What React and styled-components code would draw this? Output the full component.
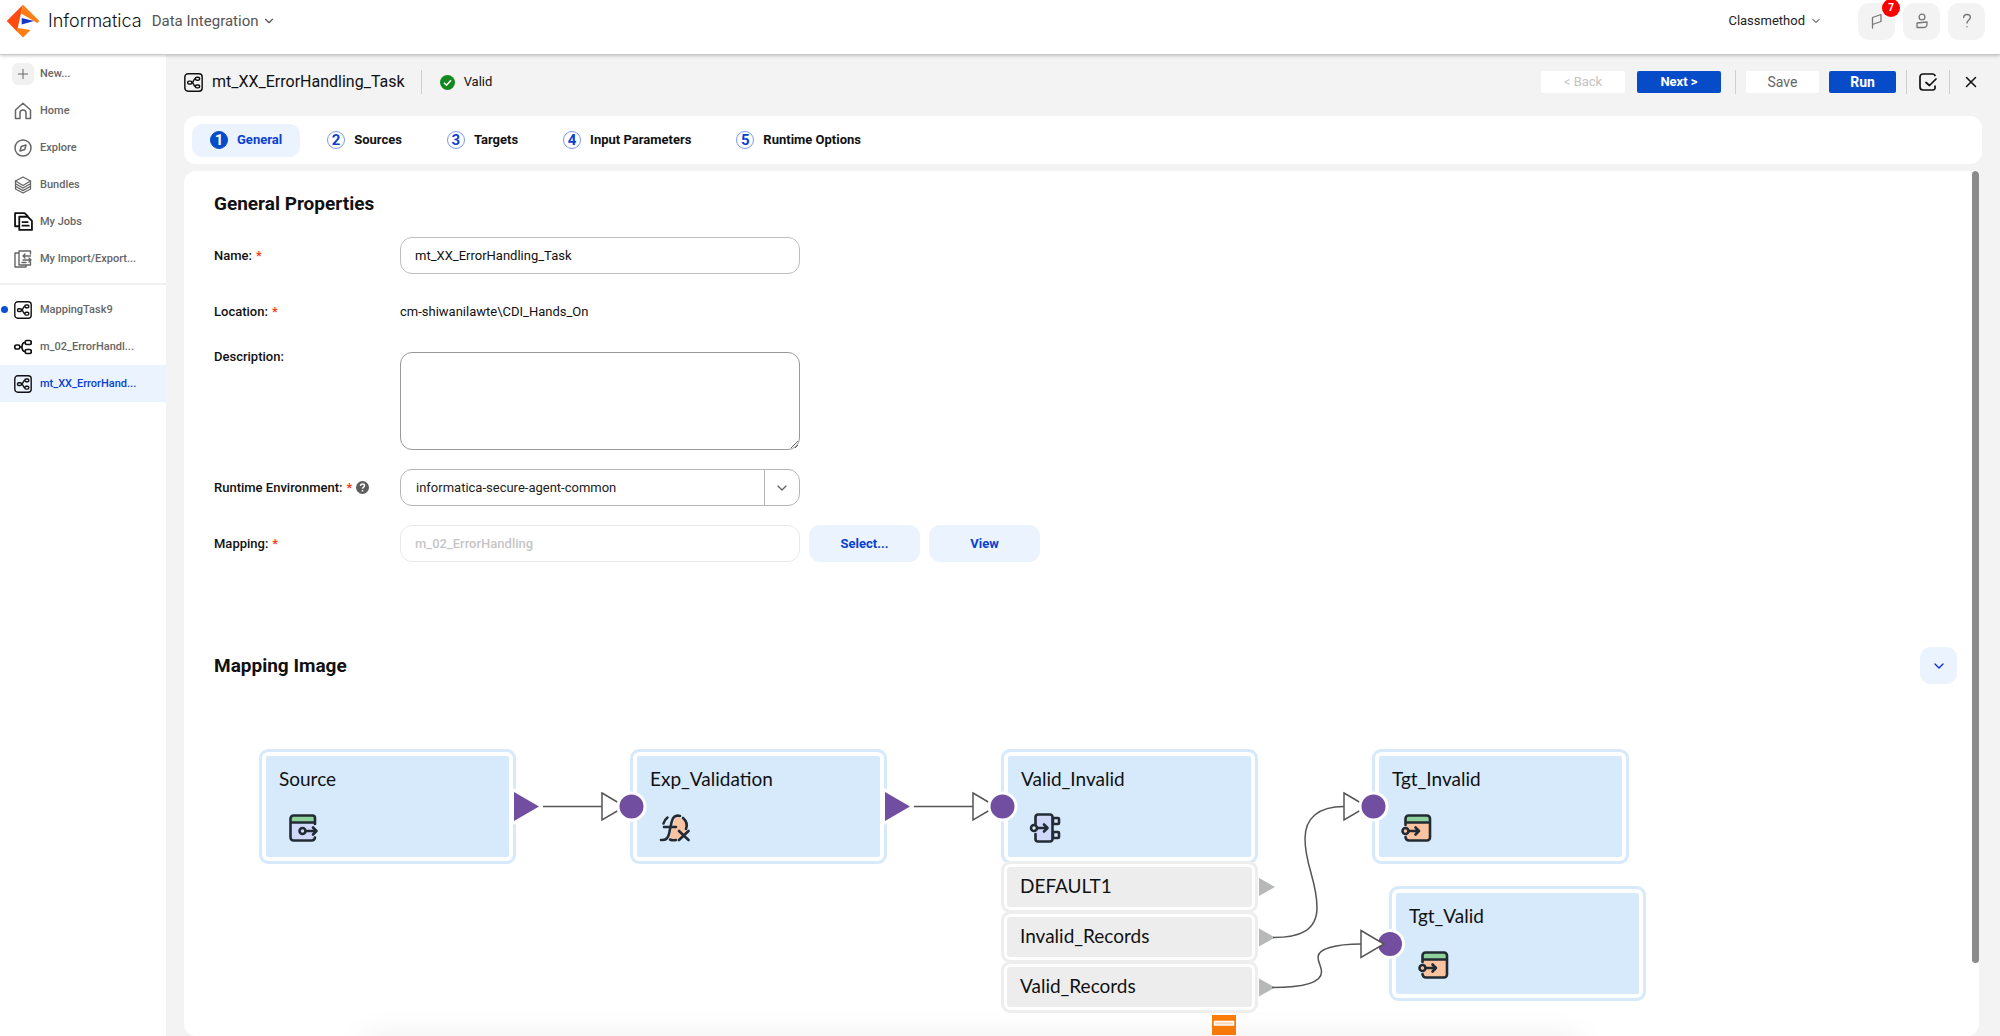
import React from "react";
import styled, { createGlobalStyle } from "styled-components";
import { ChevronDown, Plus, X } from "lucide-react";

const GlobalStyle = createGlobalStyle`
  * {
    box-sizing: border-box;
  }
  body {
    margin: 0;
    font-family: Roboto, "Liberation Sans", sans-serif;
    font-size: 13px;
    line-height: 16px;
    color: #111;
    background: #f3f3f3;
  }
  button, input, select, textarea {
    font: inherit;
    color: inherit;
  }
  button {
    padding: 0;
    border: 0;
    cursor: pointer;
  }
  a {
    color: inherit;
    text-decoration: none;
  }
  svg {
    display: block;
    flex: none;
  }
`;

const Page = styled.div`
  display: flex;
  flex-direction: column;
  height: 100vh;
  overflow: hidden;
`;

/* header */

const Header = styled.header`
  display: flex;
  align-items: center;
  flex: none;
  height: 55px;
  padding: 0 15px 12px 6px;
  background: #fff;
  border-bottom: 1px solid #c9c9c9;
  box-shadow: 0 1px 3px rgba(0, 0, 0, 0.2);
  z-index: 1;
`;

const Brand = styled.span`
  margin-left: 8px;
  font-family: Inter, sans-serif;
  font-size: 18px;
  font-weight: 300;
  line-height: 24px;
  color: #111;
`;

const Product = styled.button`
  display: flex;
  align-items: center;
  gap: 4px;
  margin-left: 10px;
  font-size: 15px;
  color: #555;
  background: none;
`;

const Org = styled.button`
  display: flex;
  align-items: center;
  gap: 5px;
  margin-left: auto;
  margin-right: 36px;
  font-size: 13px;
  color: #222;
  background: none;
`;

const HeaderActions = styled.div`
  display: flex;
  gap: 8px;
`;

const HeaderButton = styled.button`
  position: relative;
  display: grid;
  place-items: center;
  width: 37px;
  height: 37px;
  border-radius: 11px;
  color: #777;
  background: #f3f3f3;
`;

const Badge = styled.span`
  position: absolute;
  top: -4px;
  right: -5px;
  width: 18px;
  height: 18px;
  border-radius: 50%;
  font-size: 10px;
  font-weight: 700;
  line-height: 18px;
  color: #fff;
  background: #f80000;
`;

/* sidebar */

const Body = styled.div`
  display: flex;
  flex: 1;
  min-height: 0;
`;

const Sidebar = styled.nav`
  flex: none;
  width: 166px;
  background: #fff;
`;

const NavGroup = styled.div`
  & + & {
    margin-top: 6px;
    padding-top: 6px;
    border-top: 2px solid #f1f1f1;
  }
`;

const NavItem = styled.a`
  position: relative;
  display: flex;
  align-items: center;
  gap: 6px;
  height: 37px;
  padding-left: 12px;
  font-size: 11px;
  font-weight: 500;
  color: ${({ $active }) => ($active ? "#0a3fd0" : "#666")};
  background: ${({ $active }) => ($active ? "#ebf3ff" : "transparent")};
`;

const NavIcon = styled.span`
  display: grid;
  place-items: center;
  width: 22px;
  height: 22px;
  border-radius: 6px;
  color: ${({ $dark }) => ($dark ? "#111" : "#666")};
  background: ${({ $boxed }) => ($boxed ? "#f1f1f1" : "transparent")};
`;

const Dot = styled.span`
  position: absolute;
  left: 1px;
  top: 15px;
  width: 7px;
  height: 7px;
  border-radius: 50%;
  background: #0a4fcf;
`;

/* main column */

const Main = styled.main`
  display: flex;
  flex-direction: column;
  flex: 1;
  min-width: 0;
  padding: 0 18px;
`;

const TitleBar = styled.div`
  display: flex;
  align-items: center;
  flex: none;
  height: 54px;
  margin-bottom: 7px;
`;

const TaskTitle = styled.h1`
  margin: 0 16px 0 9px;
  font-size: 16px;
  font-weight: 400;
  line-height: 20px;
`;

const Divider = styled.span`
  width: 1px;
  height: 24px;
  background: #cfcfcf;
`;

const Status = styled.span`
  display: flex;
  align-items: center;
  gap: 9px;
  margin-left: 18px;
`;

const Toolbar = styled.div`
  display: flex;
  align-items: center;
  gap: 10px;
  margin-left: auto;
`;

const Pager = styled.div`
  display: flex;
  gap: 12px;
  margin-right: 4px;
`;

const ToolButton = styled.button`
  width: ${({ $width }) => $width}px;
  height: 22px;
  border-radius: 2px;
  font-size: ${({ $small }) => ($small ? 13 : 14)}px;
  font-weight: ${({ $primary }) => ($primary ? 700 : 400)};
  color: ${({ $primary }) => ($primary ? "#fff" : "#666")};
  background: ${({ $primary }) => ($primary ? "#064cc8" : "#fff")};

  &:disabled {
    color: #c4c4c4;
  }
`;

const IconButton = styled.button`
  display: grid;
  place-items: center;
  width: 22px;
  height: 24px;
  color: #111;
  background: none;
`;

const Steps = styled.nav`
  display: flex;
  align-items: center;
  gap: 9px;
  flex: none;
  height: 48px;
  padding: 0 8px;
  border-radius: 12px;
  background: #fff;
`;

const Step = styled.a`
  display: flex;
  align-items: center;
  gap: 9px;
  height: 33px;
  padding: 0 18px;
  border-radius: 10px;
  font-weight: 700;
  color: ${({ $active }) => ($active ? "#0a3fd0" : "#111")};
  background: ${({ $active }) => ($active ? "#ebf3ff" : "transparent")};
`;

const StepNumber = styled.span`
  width: 18px;
  height: 18px;
  border: 1px solid ${({ $active }) => ($active ? "#064cc8" : "#7c9ae6")};
  border-radius: 50%;
  font-size: 15px;
  line-height: 16px;
  text-align: center;
  color: ${({ $active }) => ($active ? "#fff" : "#0a3fd0")};
  background: ${({ $active }) => ($active ? "#064cc8" : "#fff")};
`;

const Panel = styled.section`
  position: relative;
  flex: 1;
  min-height: 0;
  margin: 7px 3px 0 0;
  padding: 22px 22px 0 30px;
  border-radius: 12px 4px 12px 12px;
  overflow: hidden;
  background: #fff;
`;

const ScrollThumb = styled.div`
  position: absolute;
  top: 0;
  right: 0;
  width: 7px;
  height: 792px;
  border-radius: 4px;
  background: #8b8b8b;
`;

const BottomShade = styled.div`
  position: absolute;
  left: 180px;
  right: 400px;
  bottom: -16px;
  height: 10px;
  box-shadow: 0 0 32px rgba(0, 0, 0, 0.16);
`;

const SectionTitle = styled.h2`
  margin: 0;
  font-size: 19px;
  font-weight: 700;
  line-height: 22px;
`;

/* form */

const Form = styled.form`
  display: flex;
  flex-direction: column;
  gap: 19px;
  margin-top: 22px;
`;

const FormRow = styled.div`
  display: grid;
  grid-template-columns: 177px auto;
  column-gap: 9px;
  align-items: ${({ $top }) => ($top ? "start" : "center")};
  justify-content: start;
  min-height: 37px;
`;

const Label = styled.label`
  display: flex;
  align-items: center;
  gap: 4px;
  font-weight: 500;
`;

const Required = styled.span`
  color: #f5330a;
`;

const Controls = styled.div`
  display: flex;
  gap: 9px;
`;

const TextInput = styled.input`
  width: 400px;
  height: 37px;
  padding: 0 14px;
  border: 1px solid #bdbdbd;
  border-radius: 12px;
  background: #fff;

  &:disabled {
    border-color: #e9e9e9;
    font-weight: 500;
    color: #c6c6c6;
  }
`;

const TextArea = styled.textarea`
  display: block;
  width: 400px;
  height: 98px;
  margin-top: 3px;
  padding: 8px 14px;
  border: 1px solid #999;
  border-radius: 12px;
  background: #fff;
`;

const SelectBox = styled.div`
  display: flex;
  width: 400px;
  height: 37px;
  border: 1px solid #b5b5b5;
  border-radius: 12px;
`;

const Select = styled.select`
  flex: 1;
  padding: 0 15px;
  border: 0;
  appearance: none;
  color: #222;
  background: none;
`;

const SelectArrow = styled.span`
  display: grid;
  place-items: center;
  width: 35px;
  border-left: 1px solid #b5b5b5;
  color: #666;
`;

const SoftButton = styled.button`
  width: 111px;
  height: 37px;
  border-radius: 11px;
  font-weight: 700;
  color: #0a3fd0;
  background: #ebf3ff;
`;

const ImageHeader = styled.div`
  display: flex;
  align-items: center;
  justify-content: space-between;
  margin-top: 85px;
`;

const CollapseButton = styled.button`
  display: grid;
  place-items: center;
  width: 37px;
  height: 37px;
  border-radius: 11px;
  color: #0a2fcf;
  background: #ebf3ff;
`;

/* mapping diagram */

const Canvas = styled.div`
  position: relative;
  height: 352px;
  margin-left: -30px;
  font-family: Lato, sans-serif;
  font-size: 19px;
  line-height: 24px;
  color: #111;
`;

const Node = styled.div`
  position: absolute;
  left: ${({ $x }) => $x}px;
  top: ${({ $y }) => $y}px;
  display: flex;
  flex-direction: column;
  gap: 21px;
  width: 257px;
  height: 115px;
  padding: 15px 17px;
  border: 3px solid #d7eafc;
  border-radius: 9px;
  background: #d7eafc;
  box-shadow: inset 0 0 0 4px #fff;

  svg {
    margin-left: 8px;
  }
`;

const GroupRow = styled.div`
  position: absolute;
  left: 817px;
  top: ${({ $y }) => $y}px;
  width: 257px;
  height: 52px;
  padding: 10px 16px;
  border: 3px solid #eee;
  border-radius: 9px;
  background: #ededed;
  box-shadow: inset 0 0 0 3px #fff;
`;

const Wires = styled.svg`
  position: absolute;
  left: 0;
  top: 0;
`;

const RemoveMark = styled.svg`
  position: absolute;
  left: 1028px;
  top: 331px;
`;

const Stroke = ({ size = 18, width = 1.5, children }) => (
  <svg
    width={size}
    height={size}
    viewBox="0 0 18 18"
    fill="none"
    stroke="currentColor"
    strokeWidth={width}
    strokeLinecap="round"
    strokeLinejoin="round"
    aria-hidden="true"
  >
    {children}
  </svg>
);

const Logo = () => (
  <svg width="34" height="34" viewBox="0 0 34 34" aria-hidden="true">
    <path d="M17 .7.7 17 11 27.500 15 9z" fill="#ff4a12" />
    <path d="M17 .7 33.300 17l-2 2L15 9.500z" fill="#ff7d12" />
    <path d="M12 24 24.500 26 17 33.600 10.500 27z" fill="#ff7d12" />
    <path d="M15.700 14 28 17l-12.300 3.500z" fill="#1636c8" />
  </svg>
);

const HomeIcon = () => (
  <Stroke>
    <path d="M1.500 16.500V8L9 1.200 16.500 8v8.500H12V11a3 3 0 0 0-6 0v5.500z" />
  </Stroke>
);

const ExploreIcon = () => (
  <Stroke>
    <circle cx="9" cy="9" r="8" />
    <path d="m6 12 1.200-4.500L12 6l-1.200 4.500z" />
  </Stroke>
);

const BundlesIcon = () => (
  <Stroke width={1.3}>
    <path d="M9 1 1.500 5 9 9.500 16.500 5z" />
    <path d="M1.500 5v8L9 17l7.500-4V5M1.500 7.700 9 12l7.500-4.300M1.500 10.300 9 14.600l7.500-4.300" />
  </Stroke>
);

const JobsIcon = () => (
  <Stroke size={19} width={1.7}>
    <path d="M4 13.500H1V1h9l3 3" />
    <path d="M5 4.500h8l4 4V17H5zM8 9.500h5M8 13h6" />
  </Stroke>
);

const ImportIcon = () => (
  <Stroke width={1.4}>
    <path d="M4.500 3H1v14h11v-2M16.500 4V1H5v14h11.500v-3" />
    <path d="M16.500 6H9M11 4 9 6l2 2M9 10h8M15 8l2 2-2 2M8 12.500h4" />
  </Stroke>
);

const TaskIcon = ({ size = 18 }) => (
  <Stroke size={size} width={1.4}>
    <rect x="0.800" y="0.800" width="16.400" height="16.400" rx="3" />
    <rect x="3.500" y="7.700" width="4" height="2.800" rx="1.300" />
    <rect x="10.800" y="4" width="4" height="2.800" rx="1.300" />
    <rect x="10.800" y="11.300" width="4" height="2.800" rx="1.300" />
    <path d="M7.500 9c2 0 1.300-3.600 3.300-3.600M7.500 9c2 0 1.300 3.700 3.300 3.700" />
  </Stroke>
);

const MappingIcon = () => (
  <Stroke width={1.7}>
    <rect x="0.800" y="7" width="5" height="4" rx="1.500" />
    <rect x="11.200" y="2.500" width="6" height="4" rx="1.500" />
    <rect x="11.200" y="11.500" width="6" height="4" rx="1.500" />
    <path d="M5.800 9H8M11.200 4.500C8.500 4.500 8 6 8 9s.500 4.500 3.200 4.500" />
  </Stroke>
);

const FlagIcon = () => (
  <Stroke width={1.3}>
    <path d="M4.500 16V5.500L13 2.500v7l-8.500 3" />
  </Stroke>
);

const UserIcon = () => (
  <Stroke width={1.3}>
    <circle cx="9" cy="5" r="2.900" />
    <path d="M4 11v4.500h6.500c2 0 3.500-1.500 3.500-3.500v-2z" />
  </Stroke>
);

const HelpIcon = () => (
  <Stroke width={1.4}>
    <path d="M5.700 5.500C5.700 3.500 7 2.500 9 2.500s3.300 1.200 3.300 3c0 2.500-3.300 2.500-3.300 5.500M9 14.600v.200" />
  </Stroke>
);

const ValidateIcon = () => (
  <Stroke width={1.7}>
    <path d="M16 2.500A3 3 0 0 0 14 1H4a3 3 0 0 0-3 3v10a3 3 0 0 0 3 3h10a2.500 2.500 0 0 0 2-1.500V13M7 9.500l3.500 3L17 6" />
  </Stroke>
);

const ValidIcon = () => (
  <svg width="15" height="15" viewBox="0 0 15 15" aria-hidden="true">
    <circle cx="7.500" cy="7.500" r="7.500" fill="#12891c" />
    <path d="m4 7.700 2.500 2.500L11 5.200" fill="none" stroke="#fff" strokeWidth="1.600" />
  </svg>
);

const HintIcon = () => (
  <svg width="13" height="13" viewBox="0 0 13 13" aria-hidden="true">
    <circle cx="6.500" cy="6.500" r="6.500" fill="#5e5e5e" />
    <path
      d="M4.500 5C4.500 3.700 5.300 3 6.500 3s2 .700 2 1.700c0 1.500-2 1.400-2 3M6.500 9v1.400"
      fill="none"
      stroke="#fff"
      strokeWidth="1.500"
    />
  </svg>
);

const nodeStroke = {
  fill: "none",
  stroke: "#222b33",
  strokeWidth: 2.6,
  strokeLinecap: "round",
  strokeLinejoin: "round"
};

const SourceIcon = () => (
  <svg width="32" height="32" viewBox="0 0 32 32" aria-hidden="true">
    <path d="M4 4h24v24H4z" fill="#cfd8fb" />
    <path d="M4 4h24v6H4z" fill="#8fd19a" />
    <g {...nodeStroke}>
      <path d="M28 12V6a2.500 2.500 0 0 0-2.500-2.500h-19A3 3 0 0 0 3.500 6.500v19a3 3 0 0 0 3 3h18a3.500 3.500 0 0 0 3.500-3M4 10.500h24" />
      <circle cx="15.500" cy="19" r="3" />
      <path d="M19 19h10M26 15.500l3.500 3.500-3.500 3.500" />
    </g>
  </svg>
);

const TargetIcon = () => (
  <svg width="32" height="32" viewBox="0 0 32 32" aria-hidden="true">
    <path d="M6 4h24v24H6z" fill="#fbc3a0" />
    <path d="M6 4h24v6H6z" fill="#8fd19a" />
    <g {...nodeStroke}>
      <path d="M5.500 13V6.500a3 3 0 0 1 3-3h18.500a3 3 0 0 1 3 3v19a3 3 0 0 1-3 3H9a3.500 3.500 0 0 1-3.500-3.500M6 10.500h24" />
      <circle cx="5.500" cy="19" r="3" fill="#fbc3a0" />
      <path d="M9 19h10M15.500 15.500 19 19l-3.500 3.500" />
    </g>
  </svg>
);

const ExpressionIcon = () => (
  <svg width="32" height="32" viewBox="0 0 32 32" aria-hidden="true">
    <circle cx="17" cy="16" r="11" fill="#fbc3a0" />
    <path d="M3 3h15L11 28H3z" fill="#d7eafc" />
    <g {...nodeStroke}>
      <path d="M22 4c-5-1.500-7.500 1.500-8.500 6.500L11 22c-1 4.500-3 6.500-8 6M6 15h12" />
      <path d="M25 6c3.500 3 4.500 7 3 11M5.500 11.500c.700-2.500 2-4.500 4-6M12 27.500c2 1 4 1 6 .500" />
      <path d="m21 19 9.500 9M30.500 19 21 28" />
    </g>
  </svg>
);

const RouterIcon = () => (
  <svg width="32" height="32" viewBox="0 0 32 32" aria-hidden="true">
    <path d="M7 4h16v24H7z" fill="#cfd8fb" />
    <g {...nodeStroke}>
      <path d="M6.500 12V5a2.500 2.500 0 0 1 2.500-2.500h12A2.500 2.500 0 0 1 23.500 5v22a2.500 2.500 0 0 1-2.500 2.500H9A2.500 2.500 0 0 1 6.500 27v-5" />
      <rect x="24" y="6" width="6" height="6" rx="1" />
      <rect x="24" y="20" width="6" height="6" rx="1" />
      <circle cx="5" cy="16" r="3" fill="#d7eafc" />
      <path d="M8.500 16H18M15 12.500l3.500 3.500-3.500 3.500" />
    </g>
  </svg>
);

const mainLinks = [
  { label: "New...", icon: <Plus size={16} strokeWidth={1.5} />, boxed: true },
  { label: "Home", icon: <HomeIcon /> },
  { label: "Explore", icon: <ExploreIcon /> },
  { label: "Bundles", icon: <BundlesIcon /> },
  { label: "My Jobs", icon: <JobsIcon />, dark: true },
  { label: "My Import/Export...", icon: <ImportIcon /> }
];

const openLinks = [
  { label: "MappingTask9", icon: <TaskIcon />, dark: true, unsaved: true },
  { label: "m_02_ErrorHandl...", icon: <MappingIcon />, dark: true },
  { label: "mt_XX_ErrorHand...", icon: <TaskIcon />, dark: true, active: true }
];

const steps = [
  "General",
  "Sources",
  "Targets",
  "Input Parameters",
  "Runtime Options"
];

const nodes = [
  { name: "Source", x: 75, y: 65, icon: <SourceIcon /> },
  { name: "Exp_Validation", x: 446, y: 65, icon: <ExpressionIcon /> },
  { name: "Valid_Invalid", x: 817, y: 65, icon: <RouterIcon /> },
  { name: "Tgt_Invalid", x: 1188, y: 65, icon: <TargetIcon /> },
  { name: "Tgt_Valid", x: 1205, y: 202, icon: <TargetIcon /> }
];

const groups = [
  { name: "DEFAULT1", y: 177 },
  { name: "Invalid_Records", y: 227 },
  { name: "Valid_Records", y: 277 }
];

const NavLink = ({ label, icon, dark, boxed, unsaved, active }) => (
  <NavItem href="#" $active={active}>
    {unsaved && <Dot />}
    <NavIcon $dark={dark} $boxed={boxed}>
      {icon}
    </NavIcon>
    {label}
  </NavItem>
);

const OutPort = ({ x, y }) => (
  <path
    d={`M${x} ${y - 14.5}l25 14.500-25 14.500z`}
    fill="#714e9f"
    stroke="#fff"
    strokeWidth="6"
    paintOrder="stroke"
  />
);

const InPort = ({ x, y }) => (
  <circle cx={x} cy={y} r="13.500" fill="#714e9f" stroke="#fff" strokeWidth="3" />
);

const OpenArrow = ({ x, y }) => (
  <path d={`M${x} ${y - 13.5}l23 13.500-23 13.500z`} fill="#fff" />
);

const Diagram = () => (
  <Canvas>
    {nodes.map(({ name, x, y, icon }) => (
      <Node key={name} $x={x} $y={y}>
        {name}
        {icon}
      </Node>
    ))}
    {groups.map(({ name, y }) => (
      <GroupRow key={name} $y={y}>
        {name}
      </GroupRow>
    ))}
    <Wires width="1480" height="352" viewBox="0 0 1480 352" aria-hidden="true">
      <OutPort x={330} y={122.5} />
      <OutPort x={701} y={122.5} />
      <g fill="#b7b9b9">
        <path d="M1075 194l16 9-16 9zM1075 244.500l16 9-16 9zM1075 294.500l16 9-16 9z" />
      </g>
      <g fill="none" stroke="#555" strokeWidth="1.500">
        <path d="M359 122.500h59M730 122.500h59" />
        <path d="M1089 253.500c27 0 44-7 44-30 0-27-12-42-12-69 0-20 13-32 39-32" />
        <path d="M1088 303.500c28 0 49.500-4 49.500-15.500 0-6-3.500-9-3.500-15 0-8 17-13 43-13" />
        <OpenArrow x={418} y={122.5} />
        <OpenArrow x={789} y={122.5} />
        <OpenArrow x={1160} y={122.5} />
      </g>
      <InPort x={447.5} y={122.5} />
      <InPort x={818.5} y={122.5} />
      <InPort x={1189.5} y={122.5} />
      <InPort x={1206} y={260} />
      <g stroke="#555" strokeWidth="1.500">
        <OpenArrow x={1177} y={260} />
      </g>
    </Wires>
    <RemoveMark width="24" height="20" viewBox="0 0 24 20" aria-hidden="true">
      <path d="M0 0h24v20H0z" fill="#fb7d0b" />
      <path d="M2.500 6.500h19v3.500h-19z" fill="#ffd9b8" stroke="#fff" strokeWidth="1.500" />
    </RemoveMark>
  </Canvas>
);

export default () => (
  <Page>
    <GlobalStyle />
    <Header>
      <Logo />
      <Brand>Informatica</Brand>
      <Product type="button">
        Data Integration
        <ChevronDown size={14} />
      </Product>
      <Org type="button">
        Classmethod
        <ChevronDown size={12} />
      </Org>
      <HeaderActions>
        <HeaderButton type="button" aria-label="Notifications">
          <FlagIcon />
          <Badge>7</Badge>
        </HeaderButton>
        <HeaderButton type="button" aria-label="Account">
          <UserIcon />
        </HeaderButton>
        <HeaderButton type="button" aria-label="Help">
          <HelpIcon />
        </HeaderButton>
      </HeaderActions>
    </Header>

    <Body>
      <Sidebar>
        <NavGroup>
          {mainLinks.map(link => (
            <NavLink key={link.label} {...link} />
          ))}
        </NavGroup>
        <NavGroup>
          {openLinks.map(link => (
            <NavLink key={link.label} {...link} />
          ))}
        </NavGroup>
      </Sidebar>

      <Main>
        <TitleBar>
          <TaskIcon size={19} />
          <TaskTitle>mt_XX_ErrorHandling_Task</TaskTitle>
          <Divider />
          <Status>
            <ValidIcon />
            Valid
          </Status>
          <Toolbar>
            <Pager>
              <ToolButton type="button" $width={84} $small disabled>
                &lt; Back
              </ToolButton>
              <ToolButton type="button" $width={84} $small $primary>
                Next &gt;
              </ToolButton>
            </Pager>
            <Divider />
            <ToolButton type="button" $width={73}>
              Save
            </ToolButton>
            <ToolButton type="button" $width={67} $primary>
              Run
            </ToolButton>
            <Divider />
            <IconButton type="button" aria-label="Validate">
              <ValidateIcon />
            </IconButton>
            <Divider />
            <IconButton type="button" aria-label="Close">
              <X size={18} />
            </IconButton>
          </Toolbar>
        </TitleBar>

        <Steps>
          {steps.map((step, i) => (
            <Step key={step} href="#" $active={i === 0}>
              <StepNumber $active={i === 0}>{i + 1}</StepNumber>
              {step}
            </Step>
          ))}
        </Steps>

        <Panel>
          <SectionTitle>General Properties</SectionTitle>
          <Form>
            <FormRow>
              <Label htmlFor="name">
                Name: <Required>*</Required>
              </Label>
              <TextInput id="name" defaultValue="mt_XX_ErrorHandling_Task" />
            </FormRow>
            <FormRow>
              <Label as="span">
                Location: <Required>*</Required>
              </Label>
              <span>cm-shiwanilawte\CDI_Hands_On</span>
            </FormRow>
            <FormRow $top>
              <Label htmlFor="description">Description:</Label>
              <TextArea id="description" />
            </FormRow>
            <FormRow>
              <Label htmlFor="runtime">
                Runtime Environment: <Required>*</Required>
                <HintIcon />
              </Label>
              <SelectBox>
                <Select id="runtime">
                  <option>informatica-secure-agent-common</option>
                </Select>
                <SelectArrow>
                  <ChevronDown size={16} />
                </SelectArrow>
              </SelectBox>
            </FormRow>
            <FormRow>
              <Label htmlFor="mapping">
                Mapping: <Required>*</Required>
              </Label>
              <Controls>
                <TextInput id="mapping" defaultValue="m_02_ErrorHandling" disabled />
                <SoftButton type="button">Select...</SoftButton>
                <SoftButton type="button">View</SoftButton>
              </Controls>
            </FormRow>
          </Form>

          <ImageHeader>
            <SectionTitle>Mapping Image</SectionTitle>
            <CollapseButton type="button" aria-label="Collapse mapping image">
              <ChevronDown size={16} />
            </CollapseButton>
          </ImageHeader>
          <Diagram />
          <BottomShade />
          <ScrollThumb />
        </Panel>
      </Main>
    </Body>
  </Page>
);
